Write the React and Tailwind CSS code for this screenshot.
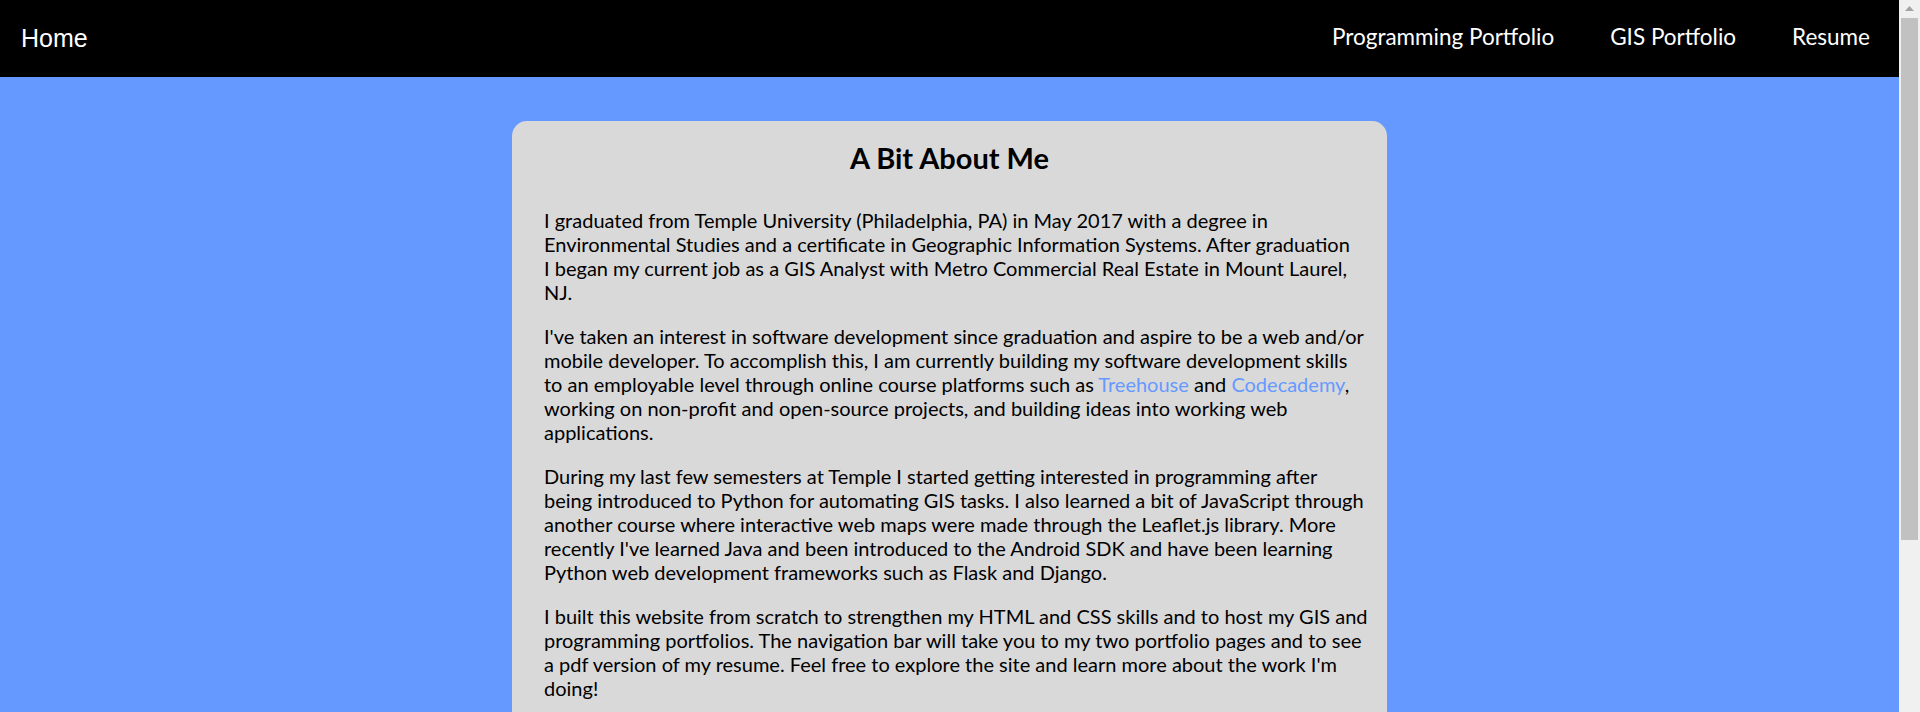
const Line = ({ children }) => <span className="block whitespace-nowrap">{children}</span>;

const Link = ({ children }) => <a className="text-[#6699ff]">{children}</a>;

export default function App() {
  return (
    <div className="flex h-[712px] w-full overflow-hidden font-['Lato','Noto_Sans',sans-serif] text-black">
      <div className="flex min-w-0 flex-1 flex-col bg-[#6699ff]">
        <nav className="flex h-[77px] shrink-0 items-start justify-between bg-black text-white">
          <a className="ml-[21px] mt-[26px] font-['Liberation_Sans','Arial',sans-serif] text-[25px] leading-[25px]">
            Home
          </a>
          <div className="mr-[1px] flex">
            <a className="mt-[26px] px-[28px] text-[22.5px] leading-[22.5px]">Programming Portfolio</a>
            <a className="mt-[26px] px-[28px] text-[22.5px] leading-[22.5px]">GIS Portfolio</a>
            <a className="mt-[26px] px-[28px] text-[22.5px] leading-[22.5px]">Resume</a>
          </div>
        </nav>
        <main className="flex justify-center pt-[44px]">
          <div className="w-[875px] shrink-0 rounded-[15px] bg-[#d9d9d9] px-[32px] pt-[19px] pb-[40px]">
            <h2 className="mb-[32px] text-center text-[29px] font-bold leading-[36px]">A Bit About Me</h2>
            <p className="mb-[20px] text-[20px] leading-[24px]">
              <Line>I graduated from Temple University (Philadelphia, PA) in May 2017 with a degree in</Line>
              <Line>Environmental Studies and a certificate in Geographic Information Systems. After graduation</Line>
              <Line>I began my current job as a GIS Analyst with Metro Commercial Real Estate in Mount Laurel,</Line>
              <Line>NJ.</Line>
            </p>
            <p className="mb-[20px] text-[20px] leading-[24px]">
              <Line>I've taken an interest in software development since graduation and aspire to be a web and/or</Line>
              <Line>mobile developer. To accomplish this, I am currently building my software development skills</Line>
              <Line>
                to an employable level through online course platforms such as <Link>Treehouse</Link> and{" "}
                <Link>Codecademy</Link>,
              </Line>
              <Line>working on non-profit and open-source projects, and building ideas into working web</Line>
              <Line>applications.</Line>
            </p>
            <p className="mb-[20px] text-[20px] leading-[24px]">
              <Line>During my last few semesters at Temple I started getting interested in programming after</Line>
              <Line>being introduced to Python for automating GIS tasks. I also learned a bit of JavaScript through</Line>
              <Line>another course where interactive web maps were made through the Leaflet.js library. More</Line>
              <Line>recently I've learned Java and been introduced to the Android SDK and have been learning</Line>
              <Line>Python web development frameworks such as Flask and Django.</Line>
            </p>
            <p className="mb-[20px] text-[20px] leading-[24px]">
              <Line>I built this website from scratch to strengthen my HTML and CSS skills and to host my GIS and</Line>
              <Line>programming portfolios. The navigation bar will take you to my two portfolio pages and to see</Line>
              <Line>a pdf version of my resume. Feel free to explore the site and learn more about the work I'm</Line>
              <Line>doing!</Line>
            </p>
          </div>
        </main>
      </div>
      <div className="flex w-[21px] shrink-0 flex-col items-center bg-[#f0f0f0]">
        <svg width="9" height="5" viewBox="0 0 9 5" className="mt-[6px]">
          <polygon points="4.5,0 9,5 0,5" fill="#a3a3a3" />
        </svg>
        <div className="mt-[7px] h-[522px] w-[17px] bg-[#c1c1c1]" />
      </div>
    </div>
  );
}
